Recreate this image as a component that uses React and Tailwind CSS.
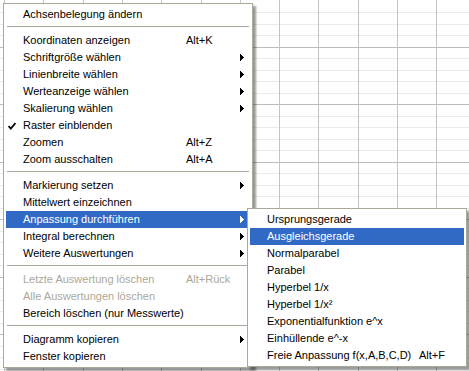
import React from 'react'

const mainItems = [
  { label: 'Achsenbelegung ändern' },
  { sep: true },
  { label: 'Koordinaten anzeigen', key: 'Alt+K' },
  { label: 'Schriftgröße wählen', sub: true },
  { label: 'Linienbreite wählen', sub: true },
  { label: 'Werteanzeige wählen', sub: true },
  { label: 'Skalierung wählen', sub: true },
  { label: 'Raster einblenden', checked: true },
  { label: 'Zoomen', key: 'Alt+Z' },
  { label: 'Zoom ausschalten', key: 'Alt+A' },
  { sep: true },
  { label: 'Markierung setzen', sub: true },
  { label: 'Mittelwert einzeichnen' },
  { label: 'Anpassung durchführen', sub: true, active: true },
  { label: 'Integral berechnen', sub: true },
  { label: 'Weitere Auswertungen', sub: true },
  { sep: true },
  { label: 'Letzte Auswertung löschen', key: 'Alt+Rück', disabled: true },
  { label: 'Alle Auswertungen löschen', disabled: true },
  { label: 'Bereich löschen (nur Messwerte)' },
  { sep: true },
  { label: 'Diagramm kopieren', sub: true },
  { label: 'Fenster kopieren' },
]

const fitItems = [
  { label: 'Ursprungsgerade' },
  { label: 'Ausgleichsgerade', active: true },
  { label: 'Normalparabel' },
  { label: 'Parabel' },
  { label: 'Hyperbel 1/x' },
  { label: 'Hyperbel 1/x²' },
  { label: 'Exponentialfunktion e^x' },
  { label: 'Einhüllende e^-x' },
  { label: 'Freie Anpassung f(x,A,B,C,D)', key: 'Alt+F' },
]

// plot grid behind the menus
function Grid() {
  const xs = [4, 43, 83, 122, 161, 201, 240, 279, 318, 358, 397, 436]
  const ys = []
  for (let k = 1; k <= 32; k++) ys.push({ y: Math.round(0.5 + 11.5 * k), major: k % 5 === 4 })
  return (
    <svg width="469" height="371" className="block" shapeRendering="crispEdges">
      <rect width="469" height="371" fill="#ffffff" />
      {ys.map(({ y, major }) => (
        <line key={'h' + y} x1="0" x2="469" y1={y + 0.5} y2={y + 0.5} stroke={major ? '#bcbcbc' : '#ebebeb'} />
      ))}
      {xs.map(x => (
        <line key={'v' + x} x1={x + 0.5} x2={x + 0.5} y1="0" y2="371" stroke="#c4c4c4" />
      ))}
    </svg>
  )
}

function Arrow({ white }) {
  return (
    <svg width="4" height="7" viewBox="0 0 4 7" shapeRendering="crispEdges" className="block">
      <polygon points="0,0 4,3.5 0,7" fill={white ? '#ffffff' : '#000000'} />
    </svg>
  )
}

function Check() {
  return (
    <svg width="8" height="8" viewBox="0 0 8 8" className="block">
      <path d="M0.5 4 L2.8 6.6 L7.5 1" fill="none" stroke="#000" strokeWidth="1.8" />
    </svg>
  )
}

function MenuRow({ item, labelW }) {
  const color = item.active ? 'text-white bg-[#316ac5]' : item.disabled ? 'text-[#aca899]' : 'text-black'
  return (
    <div className={`h-[17px] flex items-center ${color}`}>
      <span className="w-[17px] shrink-0 flex pl-[2px]">{item.checked && <Check />}</span>
      <span className={`${labelW} shrink-0 whitespace-nowrap`}>{item.label}</span>
      <span className="flex-1 whitespace-nowrap">{item.key}</span>
      <span className="w-[10px] shrink-0 flex">{item.sub && <Arrow white={item.active} />}</span>
    </div>
  )
}

function Separator() {
  return (
    <div className="h-[9px] pt-[3px] px-[1px]">
      <div className="h-px bg-[#aca899]" />
    </div>
  )
}

export default function App() {
  return (
    <div
      className="relative w-[469px] h-[371px] overflow-hidden bg-white text-[11px] leading-none"
      style={{ fontFamily: '"Liberation Sans", Arial, sans-serif' }}
    >
      <Grid />

      <div className="absolute left-[3px] top-[3px] w-[250px] border border-[#aca899] bg-white p-[2px] shadow-[3px_3px_2px_rgba(0,0,0,0.4)]">
        {mainItems.map((it, i) =>
          it.sep ? <Separator key={i} /> : <MenuRow key={i} item={it} labelW="w-[163px]" />
        )}
      </div>

      <div className="absolute left-[247px] top-[208px] w-[220px] border border-[#aca899] bg-white p-[2px] shadow-[3px_3px_2px_rgba(0,0,0,0.4)]">
        {fitItems.map((it, i) => (
          <MenuRow key={i} item={it} labelW="w-[152px]" />
        ))}
      </div>
    </div>
  )
}
